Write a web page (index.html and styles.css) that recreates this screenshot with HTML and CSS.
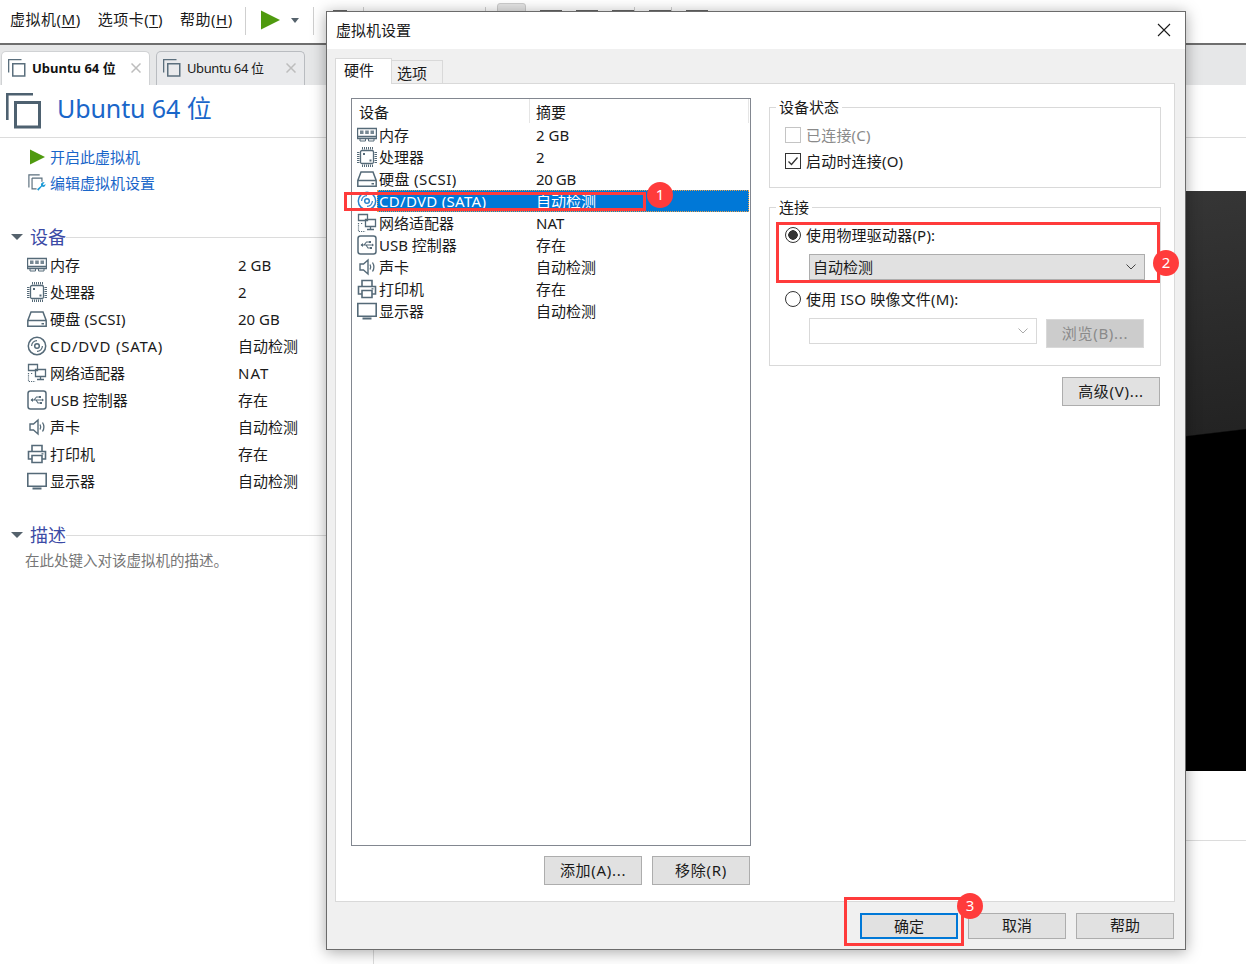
FILE: index.html
```html
<!DOCTYPE html>
<html lang="zh-CN">
<head>
<meta charset="utf-8">
<title>虚拟机设置</title>
<link rel="stylesheet" href="styles.css">
</head>
<body>
<svg class="defs" aria-hidden="true">
  <symbol id="i-vm" viewBox="0 0 36 36"><path d="M27 1.300H1.300V27" fill="none" stroke="currentColor" stroke-width="2.600"/><rect x="9.500" y="9.500" width="24" height="24.500" fill="none" stroke="currentColor" stroke-width="3"/></symbol>
  <symbol id="i-x" viewBox="0 0 10 10"><path d="M.5.500l9 9M9.500.500l-9 9" stroke="currentColor" stroke-width="1.500"/></symbol>
  <symbol id="i-mem" viewBox="0 0 20 20"><path d="M.5 3.500h19v10H.5zM.5 11.500h19" fill="none" stroke="currentColor" stroke-width="1.400"/><path d="M3 13.500v2.500h5.500v-2.500M11.500 13.500v2.500H17v-2.500" fill="none" stroke="currentColor" stroke-width="1"/><path d="M3 5.500h3.500v3.500H3zM8.200 5.500h3.600v3.500H8.200zM13.500 5.500H17v3.500h-3.500z" fill="currentColor" opacity=".8"/></symbol>
  <symbol id="i-cpu" viewBox="0 0 20 20"><rect x="3.500" y="3.500" width="13" height="13" rx="1.500" fill="none" stroke="currentColor" stroke-width="1.300"/><path d="M5.500 0v2.500M7.500 0v2.500M9.500 0v2.500M11.500 0v2.500M13.500 0v2.500M15.500 0v2.500M5.500 17.500V20M7.500 17.500V20M9.500 17.500V20M11.500 17.500V20M13.500 17.500V20M15.500 17.500V20M0 5.500h2.500M0 7.500h2.500M0 9.500h2.500M0 11.500h2.500M0 13.500h2.500M0 15.500h2.500M17.500 5.500H20M17.500 7.500H20M17.500 9.500H20M17.500 11.500H20M17.500 13.500H20M17.500 15.500H20" stroke="currentColor" stroke-width="1"/><path d="M6 6h2v2H6zM12.500 12.500h2v2h-2z" fill="currentColor"/></symbol>
  <symbol id="i-hdd" viewBox="0 0 20 20"><path d="M.8 11.500 4 3h12l3.200 8.500v5.700H.8zM.8 11.500h18.400" fill="none" stroke="currentColor" stroke-width="1.500"/><path d="M14.500 14h2.500v1.500h-2.500z" fill="currentColor"/></symbol>
  <symbol id="i-cd" viewBox="0 0 20 20"><circle cx="10" cy="10" r="8.700" fill="none" stroke="currentColor" stroke-width="1.500"/><circle cx="10" cy="10" r="2.300" fill="none" stroke="currentColor" stroke-width="1.500"/><path d="M4.600 10A5.400 5.400 0 0 1 10 4.600M15.400 10A5.400 5.400 0 0 1 10 15.400" fill="none" stroke="currentColor" stroke-width="1.200"/></symbol>
  <symbol id="i-net" viewBox="0 0 20 20"><path d="M1.500 1.500h9v6h-9zM8.500 6.500h10v7h-10zM13.500 13.500v2.500M10 16.500h7" fill="none" stroke="currentColor" stroke-width="1.300"/><path d="M1.500 10v8.500h7M4 10.500h2" fill="none" stroke="currentColor" stroke-width="1.200" stroke-dasharray="1.200 1"/></symbol>
  <symbol id="i-usb" viewBox="0 0 20 20"><rect x="1" y="1" width="18" height="18" rx="2.500" fill="none" stroke="currentColor" stroke-width="1.500"/><path d="M4 10h11M7 10l2.500-3H12M9 10l2 3h2" fill="none" stroke="currentColor" stroke-width="1.100"/><path d="M3.500 10l2.500-2v4zM12 6h2v2h-2zM15 8.500l2 1.500-2 1.500zM13 12h2v2h-2z" fill="currentColor"/></symbol>
  <symbol id="i-snd" viewBox="0 0 20 20"><path d="M3 7h3.500L11 3v14l-4.500-4H3z" fill="none" stroke="currentColor" stroke-width="1.400"/><path d="M13 7.500q1.500 2.500 0 5M15.500 5.500q2.800 4.500 0 9" fill="none" stroke="currentColor" stroke-width="1.300"/></symbol>
  <symbol id="i-prt" viewBox="0 0 20 20"><path d="M5 7V1.500h10V7M5 15H1.500V7.500h17V15H15M5 11.500h10v7H5z" fill="none" stroke="currentColor" stroke-width="1.600"/><path d="M14.500 9.200h2v1.300h-2z" fill="currentColor"/></symbol>
  <symbol id="i-mon" viewBox="0 0 20 20"><path d="M.8 2.500h18.400v12.800H.8z" fill="none" stroke="currentColor" stroke-width="1.600"/><path d="M5.500 16.500h9v2h-9z" fill="currentColor"/></symbol>
  <symbol id="i-play" viewBox="0 0 20 20"><path d="M0 0l20 10L0 20z" fill="#4f9a0f"/></symbol>
</svg>

<header class="toolbar">
  <nav class="menu">
    <span>虚拟机(<u>M</u>)</span>
    <span>选项卡(<u>T</u>)</span>
    <span>帮助(<u>H</u>)</span>
  </nav>
  <span class="sep"></span>
  <svg class="tool-play"><use href="#i-play"/></svg>
  <span class="tool-caret"></span>
  <span class="sep sep-a"></span>
  <span class="tool tool-a"></span>
  <span class="sep sep-b"></span>
  <span class="sep sep-c"></span>
  <span class="tool-active"><span class="tool"></span></span>
  <span class="tool"></span>
  <span class="tool"></span>
  <span class="tool"></span>
  <span class="sep"></span>
  <span class="tool"></span>
  <span class="sep"></span>
  <span class="tool"></span>
</header>

<div class="tabbar">
  <div class="tab tab-on"><svg class="tab-icon"><use href="#i-vm"/></svg><b>Ubuntu 64 位</b><svg class="tab-x"><use href="#i-x"/></svg></div>
  <div class="tab"><svg class="tab-icon"><use href="#i-vm"/></svg><span class="tab-name">Ubuntu 64 位</span><svg class="tab-x"><use href="#i-x"/></svg></div>
</div>

<div class="vm-head">
  <svg class="vm-icon"><use href="#i-vm"/></svg>
  <h1>Ubuntu 64 位</h1>
</div>

<main class="vm-main">
  <aside class="side">
    <div class="actions">
      <a class="action"><svg class="act-play"><use href="#i-play"/></svg>开启此虚拟机</a>
      <a class="action"><svg class="act-edit" viewBox="0 0 20 20"><path d="M13 1H1v14M4.500 4.500h11v4M4.500 4.500v12h5" fill="none" stroke="#5b6f7d" stroke-width="1.300"/><path d="M18.500 9.500l-2 2 1 1 2-1.500c0 2.500-2 4-4 3l-4 4.500-1.500-1.500 4.500-4c-.8-2.500 1.500-4.500 4-3.500z" fill="#1c9ad6"/></svg>编辑虚拟机设置</a>
    </div>
    <section>
      <h2 class="sec"><i class="tri"></i>设备<span class="sec-line"></span></h2>
      <ul class="devs">
        <li><svg><use href="#i-mem"/></svg><span>内存</span><span>2 GB</span></li>
        <li><svg><use href="#i-cpu"/></svg><span>处理器</span><span>2</span></li>
        <li><svg><use href="#i-hdd"/></svg><span class="ls-s">硬盘 (SCSI)</span><span>20 GB</span></li>
        <li><svg><use href="#i-cd"/></svg><span class="ls-l">CD/DVD (SATA)</span><span>自动检测</span></li>
        <li><svg><use href="#i-net"/></svg><span>网络适配器</span><span class="ls-nat">NAT</span></li>
        <li><svg><use href="#i-usb"/></svg><span>USB 控制器</span><span>存在</span></li>
        <li><svg><use href="#i-snd"/></svg><span>声卡</span><span>自动检测</span></li>
        <li><svg><use href="#i-prt"/></svg><span>打印机</span><span>存在</span></li>
        <li><svg><use href="#i-mon"/></svg><span>显示器</span><span>自动检测</span></li>
      </ul>
    </section>
    <section class="sec-desc">
      <h2 class="sec"><i class="tri"></i>描述<span class="sec-line"></span></h2>
      <p class="desc">在此处键入对该虚拟机的描述。</p>
    </section>
  </aside>
  <div class="stage">
    <div class="screen"></div>
    <div class="stage-line"></div>
  </div>
</main>

<div class="dialog" role="dialog">
  <div class="titlebar">
    <span>虚拟机设置</span>
    <svg class="close" viewBox="0 0 14 14"><path d="M1 1l12 12M13 1L1 13" stroke="#1a1a1a" stroke-width="1.100"/></svg>
  </div>
  <div class="dlg-body">
    <div class="dlg-tabs">
      <div class="dtab dtab-on">硬件</div>
      <div class="dtab">选项</div>
    </div>
    <div class="panel">
      <div class="col-left">
        <div class="list">
          <div class="list-head"><span>设备</span><span>摘要</span></div>
          <div class="row"><svg><use href="#i-mem"/></svg><div class="cells"><span>内存</span><span>2 GB</span></div></div>
          <div class="row"><svg><use href="#i-cpu"/></svg><div class="cells"><span>处理器</span><span>2</span></div></div>
          <div class="row"><svg><use href="#i-hdd"/></svg><div class="cells"><span class="ls-d">硬盘 (SCSI)</span><span class="ls-n">20 GB</span></div></div>
          <div class="row row-sel"><svg><use href="#i-cd"/></svg><div class="cells"><span class="ls-d2">CD/DVD (SATA)</span><span>自动检测</span></div></div>
          <div class="row"><svg><use href="#i-net"/></svg><div class="cells"><span>网络适配器</span><span>NAT</span></div></div>
          <div class="row"><svg><use href="#i-usb"/></svg><div class="cells"><span>USB 控制器</span><span>存在</span></div></div>
          <div class="row"><svg><use href="#i-snd"/></svg><div class="cells"><span>声卡</span><span>自动检测</span></div></div>
          <div class="row"><svg><use href="#i-prt"/></svg><div class="cells"><span>打印机</span><span>存在</span></div></div>
          <div class="row"><svg><use href="#i-mon"/></svg><div class="cells"><span>显示器</span><span>自动检测</span></div></div>
        </div>
        <div class="list-btns">
          <button class="btn">添加(A)...</button>
          <button class="btn">移除(R)</button>
        </div>
      </div>
      <div class="col-right">
        <fieldset class="group">
          <legend>设备状态</legend>
          <div class="opt opt-off"><i class="check check-off"></i>已连接(C)</div>
          <div class="opt"><i class="check"><svg viewBox="0 0 14 14"><path d="M2.500 7.500l3 3 6-7" fill="none" stroke="#333" stroke-width="1.300"/></svg></i>启动时连接(O)</div>
        </fieldset>
        <fieldset class="group group-conn">
          <legend>连接</legend>
          <div class="opt"><i class="radio radio-on"></i>使用物理驱动器(P):</div>
          <div class="select select-on"><span>自动检测</span><svg viewBox="0 0 10 6"><path d="M.5.500 5 5 9.500.500" fill="none" stroke="#444" stroke-width="1"/></svg></div>
          <div class="opt opt-iso"><i class="radio"></i>使用 ISO 映像文件(M):</div>
          <div class="iso-row">
            <div class="select select-off"><span></span><svg viewBox="0 0 10 6"><path d="M.5.500 5 5 9.500.500" fill="none" stroke="#aaa" stroke-width="1"/></svg></div>
            <button class="btn btn-off">浏览(B)...</button>
          </div>
        </fieldset>
        <button class="btn btn-adv">高级(V)...</button>
      </div>
    </div>
    <div class="dlg-foot">
      <button class="btn btn-foot btn-default">确定</button>
      <button class="btn btn-foot">取消</button>
      <button class="btn btn-foot">帮助</button>
    </div>
  </div>
  <span class="mark mark-1"></span>
  <span class="mark mark-2"></span>
  <span class="mark mark-3"></span>
  <span class="badge badge-1">1</span>
  <span class="badge badge-2">2</span>
  <span class="badge badge-3">3</span>
</div>
</body>
</html>
```

FILE: styles.css
```css
* { box-sizing: border-box; }
html, body { margin: 0; height: 964px; overflow: hidden; }
body {
  background: #fff;
  color: #1a1a1a;
  font: 15px/22px "Noto Sans", "Noto Sans CJK SC", sans-serif;
}
.defs { position: absolute; width: 0; height: 0; }
u { text-underline-offset: 2px; }

/* toolbar */
.toolbar {
  height: 45px;
  display: flex;
  align-items: flex-start;
  border-bottom: 2px solid #6e6e6e;
  background: #fff;
}
.menu {
  width: 245px;
  height: 43px;
  padding: 8px 0 0 10px;
  display: flex;
  gap: 17px;
  font-size: 15px;
  letter-spacing: .5px;
  white-space: nowrap;
}
.sep { width: 1px; height: 28px; margin-top: 7px; background: #cfcfcf; flex: none; }
.tool-play { width: 19px; height: 20px; margin: 10px 0 0 15px; flex: none; }
.tool-caret {
  margin: 18px 0 0 11px;
  border: 4.5px solid transparent;
  border-top: 5px solid #55626c;
  border-bottom: 0;
  flex: none;
}
.sep-a { margin-left: 14px; }
.tool { width: 22px; height: 20px; margin: 10px 0 0 14px; border-top: 2px solid #666; flex: none; }
.tool-a { width: 14px; margin-left: 19px; }
.sep-b { margin-left: 16px; }
.sep-c { margin-left: 121px; }
.tool-active {
  width: 29px; height: 30px; margin: 3px 0 0 11px;
  background: #e4e4e4; border: 1px solid #ccc; border-radius: 3px; flex: none;
}
.tool-active .tool { margin: 6px 0 0 3px; }

/* tabs */
.tabbar {
  height: 40px;
  padding: 6px 0 0 1px;
  display: flex;
  gap: 6px;
  background: #e6e7e8;
}
.tab {
  width: 149px;
  padding: 6px 8px 0 6px;
  display: flex;
  align-items: flex-start;
  gap: 6px;
  font-size: 13px;
  line-height: 20px;
  background: #e9eaec;
  border: 1px solid #b9bcc0;
  border-bottom: 0;
  border-radius: 5px 5px 0 0;
}
.tab-on { background: #fff; border-color: #d0d2d4; }
.tab-on b { color: #111; font-weight: 700; }
.tab-name { letter-spacing: -.4px; }
.tab-icon { width: 18px; height: 18px; margin-top: 1px; color: #5b6f7d; flex: none; }
.tab-x { width: 10px; height: 10px; margin: 5px 0 0 auto; color: #bdbdbd; flex: none; }

/* vm header */
.vm-head {
  height: 53px;
  padding: 8px 0 0 6px;
  display: flex;
  border-bottom: 1px solid #dcdcdc;
}
.vm-icon { width: 36px; height: 36px; color: #4e6170; flex: none; }
h1 {
  margin: 0 0 0 15px;
  color: #1a66c9;
  font-size: 25px;
  font-weight: 400;
  line-height: 30px;
  letter-spacing: -.1px;
}

/* main */
.vm-main { display: flex; height: 826px; }
.side { width: 374px; border-right: 1px solid #dcdcdc; flex: none; }
.actions { padding: 6px 0 0 28px; }
.action {
  height: 26px;
  display: flex;
  align-items: center;
  color: #1a66c9;
}
.act-play { width: 15px; height: 16px; margin: 0 5px 0 2px; flex: none; }
.act-edit { width: 18px; height: 18px; margin-right: 4px; flex: none; }
.sec {
  height: 24px;
  margin: 29px 0 2px;
  padding-left: 11px;
  display: flex;
  align-items: center;
  color: #3b4aa5;
  font-size: 18px;
  font-weight: 400;
}
.tri {
  margin-right: 7px;
  border: 6px solid transparent;
  border-top: 6px solid #55626c;
  border-bottom: 0;
}
.sec-line { flex: 1; height: 1px; background: #dcdcdc; }
.devs { margin: 0; padding: 0 0 0 27px; list-style: none; }
.devs li {
  height: 27px;
  display: grid;
  grid-template-columns: 23px 188px 1fr;
  align-items: center;
}
.devs svg { width: 20px; height: 20px; margin-top: 1px; color: #556a78; }
.ls-s { letter-spacing: .2px; }
.ls-l { letter-spacing: .75px; }
.ls-nat { letter-spacing: 1px; }
.sec-desc .sec { margin: 29px 0 1px; }
.desc { margin: 0; padding-left: 25px; color: #777; font-size: 14.500px; line-height: 24px; }

.stage { flex: 1; padding-top: 53px; }
.screen {
  height: 580px;
  background: linear-gradient(173.200deg, #3d3d3d 0, #232323 49.900%, #000 50.100%);
}
.stage-line { height: 70px; border-bottom: 1px solid #dcdcdc; }

/* dialog */
.dialog {
  position: absolute;
  left: 326px;
  top: 11px;
  width: 860px;
  height: 939px;
  display: flex;
  flex-direction: column;
  border: 1px solid #6b6b6b;
  background: #f0f0f0;
  box-shadow: 0 2px 14px rgba(0, 0, 0, .35);
}
.titlebar {
  height: 37px;
  padding: 7px 14px 0 9px;
  display: flex;
  justify-content: space-between;
  background: #fff;
  flex: none;
}
.close { width: 14px; height: 14px; margin: 4px 0 0; }
.dlg-body { flex: 1; padding: 9px 10px 0 8px; display: flex; flex-direction: column; }
.dlg-tabs { height: 26px; display: flex; align-items: flex-end; position: relative; z-index: 1; flex: none; }
.dtab {
  height: 24px;
  width: 51px;
  padding-left: 5px;
  background: #f0f0f0;
  border: 1px solid #d9d9d9;
  border-left: 0;
  line-height: 25px;
}
.dtab-on {
  width: 57px;
  height: 26px;
  padding-left: 8px;
  background: #fff;
  border: 1px solid #d9d9d9;
  border-bottom: 0;
  line-height: 22px;
}
.panel {
  height: 819px;
  margin-top: -1px;
  padding: 14px 14px 0 15px;
  display: flex;
  gap: 18px;
  background: #fff;
  border: 1px solid #d9d9d9;
  flex: none;
}
.col-left { width: 400px; flex: none; }
.list { height: 748px; border: 1px solid #828790; }
.list-head {
  height: 25px;
  display: grid;
  grid-template-columns: 178px 1fr;
}
.list-head span { padding: 2px 0 0 7px; height: 24px; border-right: 1px solid #e5e5e5; }
.list-head span + span { padding-left: 6px; margin-right: 1px; }
.row { height: 22px; padding-left: 5px; display: flex; align-items: center; }
.row > svg { width: 20px; height: 20px; color: #556a78; flex: none; }
.cells {
  flex: 1;
  height: 22px;
  margin-right: 1px;
  padding-left: 2px;
  display: grid;
  grid-template-columns: 157px 1fr;
  line-height: 22px;
}
.ls-d { letter-spacing: .4px; }
.ls-d2 { letter-spacing: .3px; }
.ls-n { letter-spacing: -.4px; }
.row-sel .cells { background: #0078d7; color: #fff; outline: 1px dotted #e8a14c; outline-offset: -1px; }
.row-sel > svg { color: #2b83cc; }
.list-btns { margin-top: 10px; padding-right: 1px; display: flex; justify-content: flex-end; gap: 10px; }

.btn {
  width: 98px;
  height: 29px;
  padding: 0 0 2px;
  font: inherit;
  letter-spacing: .7px;
  color: inherit;
  background: #e1e1e1;
  border: 1px solid #adadad;
  border-radius: 0;
}
.col-right { width: 392px; flex: none; display: flex; flex-direction: column; }
.group {
  margin: 0;
  padding: 6px 0 13px 15px;
  border: 1px solid #d9d9d9;
  height: 90px;
}
.group legend { height: 18px; line-height: 18px; margin-left: -9px; padding: 0 3px; }
.group-conn { margin-top: 10px; height: 168px; padding-bottom: 0; }
.opt { height: 26px; display: flex; align-items: center; white-space: pre; letter-spacing: .2px; }
.opt-off { color: #8a8a8a; }
.check {
  width: 16px; height: 16px; margin-right: 5px;
  background: #fff; border: 1px solid #333; flex: none;
}
.check svg { display: block; width: 14px; height: 14px; }
.check-off { border-color: #c4c4c4; }
.radio {
  width: 16px; height: 16px; margin-right: 5px;
  background: #fff; border: 1px solid #333; border-radius: 50%; flex: none;
}
.radio-on { background: radial-gradient(circle, #333 0 4.500px, #fff 5px); }
.select {
  height: 26px;
  padding: 0 3px;
  display: flex;
  align-items: center;
  justify-content: space-between;
  border: 1px solid #adadad;
  background: #e1e1e1;
}
.select svg { width: 10px; height: 6px; margin-right: 5px; }
.select-on { width: 336px; margin: 6px 0 0 24px; }
.select-off { width: 228px; background: #fff; border-color: #d9d9d9; }
.opt-iso { margin-top: 6px; }
.iso-row { margin: 6px 0 0 24px; display: flex; align-items: flex-start; gap: 9px; }
.btn-off { margin-top: 1px; background: #ccc; border-color: #d9d9d9; color: #8a8a8a; }
.btn-adv { margin: 11px 1px 0 auto; }
.dlg-foot { height: 48px; padding-top: 11px; display: flex; justify-content: flex-end; gap: 10px; flex: none; margin-right: 1px; }
.btn-foot { height: 26px; letter-spacing: 0; }
.btn-default { border: 2px solid #0078d7; }

/* annotations */
.mark { position: absolute; border: 3px solid #ff3b3b; pointer-events: none; }
.mark-1 { left: 17px; top: 180px; width: 302px; height: 19px; }
.mark-2 { left: 449px; top: 210px; width: 384px; height: 61px; }
.mark-3 { left: 517px; top: 885px; width: 120px; height: 49px; }
.badge {
  position: absolute;
  width: 26px;
  height: 26px;
  border-radius: 50%;
  background: #ff3b3b;
  color: #fff;
  font-size: 15px;
  line-height: 24px;
  text-align: center;
}
.badge-1 { left: 320px; top: 170px; }
.badge-2 { left: 826px; top: 238px; }
.badge-3 { left: 630px; top: 881px; }
```
